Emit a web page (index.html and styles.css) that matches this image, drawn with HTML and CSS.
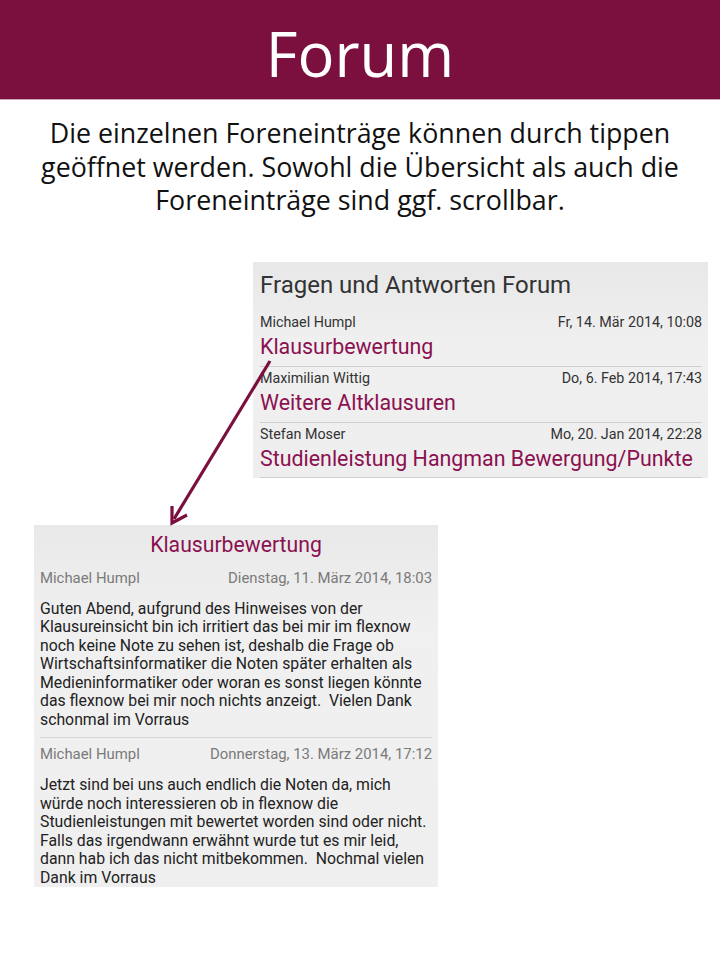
FILE: index.html
```html
<!DOCTYPE html>
<html lang="de">
<head>
<meta charset="utf-8">
<title>Forum</title>
<link rel="stylesheet" href="styles.css">
</head>
<body>
<header class="banner"><h1 class="banner-title">Forum</h1></header>
<p class="intro">Die einzelnen Foreneinträge können durch tippen<br>geöffnet werden. Sowohl die Übersicht als auch die<br>Foreneinträge sind ggf. scrollbar.</p>
<main class="stage">
  <section class="overview">
    <h2 class="overview-title">Fragen und Antworten Forum</h2>
    <div class="topic">
      <div class="meta"><span>Michael Humpl</span><span>Fr, 14. Mär 2014, 10:08</span></div>
      <div class="topic-title">Klausurbewertung</div>
    </div>
    <div class="topic">
      <div class="meta"><span>Maximilian Wittig</span><span>Do, 6. Feb 2014, 17:43</span></div>
      <div class="topic-title">Weitere Altklausuren</div>
    </div>
    <div class="topic">
      <div class="meta"><span>Stefan Moser</span><span>Mo, 20. Jan 2014, 22:28</span></div>
      <div class="topic-title">Studienleistung Hangman Bewergung/Punkte</div>
    </div>
  </section>
  <section class="detail">
    <h2 class="detail-title">Klausurbewertung</h2>
    <article class="post">
      <div class="post-meta"><span>Michael Humpl</span><span>Dienstag, 11. März 2014, 18:03</span></div>
      <p class="post-body">Guten Abend, aufgrund des Hinweises von der Klausureinsicht bin ich irritiert das bei mir im flexnow noch keine Note zu sehen ist, deshalb die Frage ob Wirtschaftsinformatiker die Noten später erhalten als Medieninformatiker oder woran es sonst liegen könnte das flexnow bei mir noch nichts anzeigt.&nbsp; Vielen Dank schonmal im Vorraus</p>
    </article>
    <article class="post">
      <div class="post-meta"><span>Michael Humpl</span><span>Donnerstag, 13. März 2014, 17:12</span></div>
      <p class="post-body">Jetzt sind bei uns auch endlich die Noten da, mich würde noch interessieren ob in flexnow die Studienleistungen mit bewertet worden sind oder nicht. Falls das irgendwann erwähnt wurde tut es mir leid, dann hab ich das nicht mitbekommen.&nbsp; Nochmal vielen Dank im Vorraus</p>
    </article>
  </section>
  <svg class="arrow" width="720" height="963" viewBox="0 0 720 963">
    <line x1="270" y1="361" x2="174" y2="519" stroke="#7b0f3e" stroke-width="3.2"/>
    <polyline points="172,506 172,523 187,515" fill="none" stroke="#7b0f3e" stroke-width="3.2"/>
  </svg>
</main>
</body>
</html>
```
FILE: styles.css
```css
html, body {
  margin: 0;
  padding: 0;
  background: #ffffff;
}
body {
  width: 720px;
  height: 963px;
  position: relative;
  overflow: hidden;
}
.banner {
  height: 100px;
  background: #7b0f3e;
  display: flex;
  align-items: center;
  justify-content: center;
  border-bottom: 1px solid #c9a6b6;
  box-sizing: border-box;
}
.banner-title {
  margin: 0;
  font-family: "Open Sans", sans-serif;
  font-weight: 400;
  font-size: 61.5px;
  color: #ffffff;
  line-height: 1;
  padding-top: 9px;
}
.intro {
  margin: 16px 0 0;
  text-align: center;
  font-family: "Open Sans", sans-serif;
  font-size: 26.8px;
  line-height: 33.5px;
  color: #111;
}
.stage {
  padding-top: 45px;
}
.overview {
  margin-left: 253px;
  width: 455px;
  height: 216px;
  background: linear-gradient(#e8e8e8, #f0f0f0 40%, #eeeeee);
  box-sizing: border-box;
  padding: 8px 6px 0 7px;
  font-family: Roboto, sans-serif;
}
.overview-title {
  margin: 0;
  font-weight: 400;
  font-size: 24px;
  line-height: 30px;
  color: #333;
  height: 41px;
}
.topic {
  height: 55.5px;
  border-bottom: 1px solid #cfcfcf;
  box-sizing: border-box;
}
.topic:first-of-type {
  height: 56.5px;
}
.meta {
  display: flex;
  justify-content: space-between;
  font-size: 14.3px;
  line-height: 18px;
  color: #333;
  padding-top: 2px;
}
.topic-title {
  font-size: 21.4px;
  line-height: 28px;
  margin-top: 2px;
  color: #8b1050;
}
.detail {
  margin-top: 47px;
  margin-left: 34px;
  width: 404px;
  height: 362px;
  background: linear-gradient(#e9e9e9, #f0f0f0 30%, #efefef);
  box-sizing: border-box;
  padding: 6px 6px 0 6px;
  font-family: Roboto, sans-serif;
}
.detail-title {
  margin: 0;
  text-align: center;
  font-weight: 400;
  font-size: 21.2px;
  line-height: 28px;
  color: #8b1050;
  height: 37px;
}
.post {
  border-bottom: 1px solid #d6d6d6;
  padding-bottom: 8px;
  margin-bottom: 6px;
}
.post:last-child {
  border-bottom: none;
}
.post-meta {
  display: flex;
  justify-content: space-between;
  font-size: 14.9px;
  line-height: 20px;
  color: #7a7a7a;
}
.post-body {
  margin: 12px 0 0;
  font-size: 15.8px;
  line-height: 18.5px;
  color: #222;
}
.arrow {
  position: absolute;
  left: 0;
  top: 0;
  pointer-events: none;
}
```
